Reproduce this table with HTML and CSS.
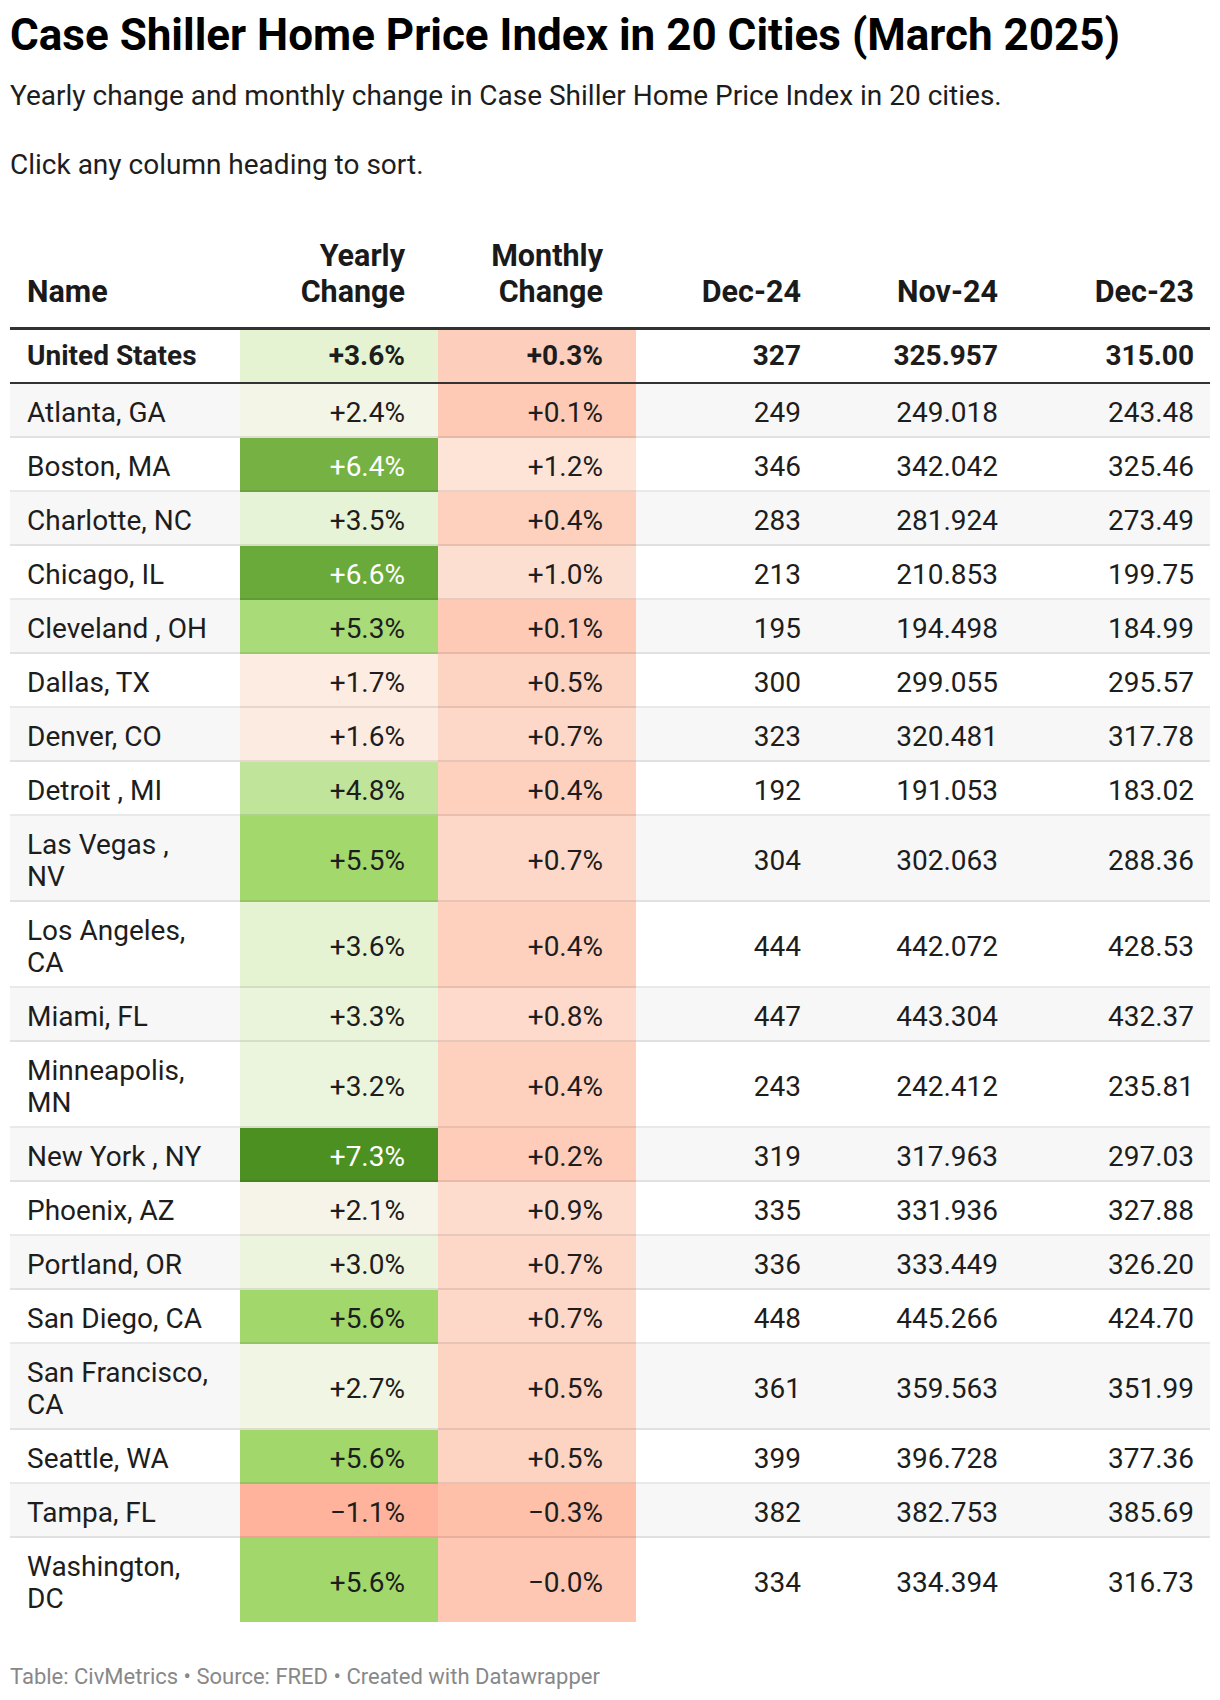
FILE: index.html
```html
<!DOCTYPE html>
<html lang="en">
<head>
<meta charset="utf-8">
<title>Case Shiller Home Price Index in 20 Cities (March 2025)</title>
<link rel="stylesheet" href="styles.css">
</head>
<body>
<div class="page">
  <h1 class="title">Case Shiller Home Price Index in 20 Cities (March 2025)</h1>
  <div class="desc">
    <p>Yearly change and monthly change in Case Shiller Home Price Index in 20 cities.</p>
    <p>Click any column heading to sort.</p>
  </div>
  <table class="data">
    <colgroup>
      <col class="c-name"><col class="c-year"><col class="c-month"><col class="c-d24"><col class="c-n24"><col class="c-d23">
    </colgroup>
    <thead>
      <tr>
        <th class="name">Name</th>
        <th class="heat">Yearly<br>Change</th>
        <th class="heat">Monthly<br>Change</th>
        <th class="num">Dec-24</th>
        <th class="num">Nov-24</th>
        <th class="num">Dec-23</th>
      </tr>
    </thead>
    <tbody>
      <tr class="total">
        <td class="name">United States</td>
        <td class="heat" style="background:#e5f3d3">+3.6%</td>
        <td class="heat" style="background:#fecebc">+0.3%</td>
        <td class="num">327</td><td class="num">325.957</td><td class="num">315.00</td>
      </tr>
      <tr>
        <td class="name">Atlanta, GA</td>
        <td class="heat" style="background:#f3f5e6">+2.4%</td>
        <td class="heat" style="background:#fecab6">+0.1%</td>
        <td class="num">249</td><td class="num">249.018</td><td class="num">243.48</td>
      </tr>
      <tr>
        <td class="name">Boston, MA</td>
        <td class="heat light" style="background:#76b243">+6.4%</td>
        <td class="heat" style="background:#fde4d7">+1.2%</td>
        <td class="num">346</td><td class="num">342.042</td><td class="num">325.46</td>
      </tr>
      <tr>
        <td class="name">Charlotte, NC</td>
        <td class="heat" style="background:#e7f3d6">+3.5%</td>
        <td class="heat" style="background:#fed1bf">+0.4%</td>
        <td class="num">283</td><td class="num">281.924</td><td class="num">273.49</td>
      </tr>
      <tr>
        <td class="name">Chicago, IL</td>
        <td class="heat light" style="background:#6aaa3b">+6.6%</td>
        <td class="heat" style="background:#fcdfd1">+1.0%</td>
        <td class="num">213</td><td class="num">210.853</td><td class="num">199.75</td>
      </tr>
      <tr>
        <td class="name">Cleveland , OH</td>
        <td class="heat" style="background:#a9db78">+5.3%</td>
        <td class="heat" style="background:#fecab6">+0.1%</td>
        <td class="num">195</td><td class="num">194.498</td><td class="num">184.99</td>
      </tr>
      <tr>
        <td class="name">Dallas, TX</td>
        <td class="heat" style="background:#fcece1">+1.7%</td>
        <td class="heat" style="background:#fdd3c2">+0.5%</td>
        <td class="num">300</td><td class="num">299.055</td><td class="num">295.57</td>
      </tr>
      <tr>
        <td class="name">Denver, CO</td>
        <td class="heat" style="background:#fcebe1">+1.6%</td>
        <td class="heat" style="background:#fdd8c8">+0.7%</td>
        <td class="num">323</td><td class="num">320.481</td><td class="num">317.78</td>
      </tr>
      <tr>
        <td class="name">Detroit , MI</td>
        <td class="heat" style="background:#c0e49a">+4.8%</td>
        <td class="heat" style="background:#fed1bf">+0.4%</td>
        <td class="num">192</td><td class="num">191.053</td><td class="num">183.02</td>
      </tr>
      <tr>
        <td class="name">Las Vegas ,<br>NV</td>
        <td class="heat" style="background:#a3d86d">+5.5%</td>
        <td class="heat" style="background:#fdd8c8">+0.7%</td>
        <td class="num">304</td><td class="num">302.063</td><td class="num">288.36</td>
      </tr>
      <tr>
        <td class="name">Los Angeles,<br>CA</td>
        <td class="heat" style="background:#e5f3d3">+3.6%</td>
        <td class="heat" style="background:#fed1bf">+0.4%</td>
        <td class="num">444</td><td class="num">442.072</td><td class="num">428.53</td>
      </tr>
      <tr>
        <td class="name">Miami, FL</td>
        <td class="heat" style="background:#e9f4da">+3.3%</td>
        <td class="heat" style="background:#fddacb">+0.8%</td>
        <td class="num">447</td><td class="num">443.304</td><td class="num">432.37</td>
      </tr>
      <tr>
        <td class="name">Minneapolis,<br>MN</td>
        <td class="heat" style="background:#ebf4dc">+3.2%</td>
        <td class="heat" style="background:#fed1bf">+0.4%</td>
        <td class="num">243</td><td class="num">242.412</td><td class="num">235.81</td>
      </tr>
      <tr>
        <td class="name">New York , NY</td>
        <td class="heat light" style="background:#4b9021">+7.3%</td>
        <td class="heat" style="background:#feccb9">+0.2%</td>
        <td class="num">319</td><td class="num">317.963</td><td class="num">297.03</td>
      </tr>
      <tr>
        <td class="name">Phoenix, AZ</td>
        <td class="heat" style="background:#f6f4e8">+2.1%</td>
        <td class="heat" style="background:#fddcce">+0.9%</td>
        <td class="num">335</td><td class="num">331.936</td><td class="num">327.88</td>
      </tr>
      <tr>
        <td class="name">Portland, OR</td>
        <td class="heat" style="background:#edf4de">+3.0%</td>
        <td class="heat" style="background:#fdd8c8">+0.7%</td>
        <td class="num">336</td><td class="num">333.449</td><td class="num">326.20</td>
      </tr>
      <tr>
        <td class="name">San Diego, CA</td>
        <td class="heat" style="background:#a1d76b">+5.6%</td>
        <td class="heat" style="background:#fdd8c8">+0.7%</td>
        <td class="num">448</td><td class="num">445.266</td><td class="num">424.70</td>
      </tr>
      <tr>
        <td class="name">San Francisco,<br>CA</td>
        <td class="heat" style="background:#f1f5e4">+2.7%</td>
        <td class="heat" style="background:#fdd3c2">+0.5%</td>
        <td class="num">361</td><td class="num">359.563</td><td class="num">351.99</td>
      </tr>
      <tr>
        <td class="name">Seattle, WA</td>
        <td class="heat" style="background:#a1d76b">+5.6%</td>
        <td class="heat" style="background:#fdd3c2">+0.5%</td>
        <td class="num">399</td><td class="num">396.728</td><td class="num">377.36</td>
      </tr>
      <tr>
        <td class="name">Tampa, FL</td>
        <td class="heat" style="background:#ffb39c">−1.1%</td>
        <td class="heat" style="background:#ffc0aa">−0.3%</td>
        <td class="num">382</td><td class="num">382.753</td><td class="num">385.69</td>
      </tr>
      <tr>
        <td class="name">Washington,<br>DC</td>
        <td class="heat" style="background:#a1d76b">+5.6%</td>
        <td class="heat" style="background:#fec7b3">−0.0%</td>
        <td class="num">334</td><td class="num">334.394</td><td class="num">316.73</td>
      </tr>
    </tbody>
  </table>
  <p class="footer">Table: CivMetrics • Source: FRED • Created with Datawrapper</p>
</div>
</body>
</html>
```

FILE: styles.css
```css
body {
  margin: 0;
  background: #ffffff;
  color: #1d1d1d;
  font-family: Roboto, "Noto Sans", "Liberation Sans", sans-serif;
}

.page {
  padding: 10px 10px 0 10px;
}

.title {
  margin: 0;
  font-size: 44px;
  line-height: 50px;
  font-weight: 700;
  color: #000000;
}

.desc {
  margin-top: 19px;
}

.desc p {
  margin: 0;
  font-size: 28px;
  line-height: 34.5px;
}

.desc p + p {
  margin-top: 34.5px;
}

.data {
  margin-top: 45px;
  width: 1200px;
  table-layout: fixed;
  border-collapse: separate;
  border-spacing: 0;
  font-size: 28px;
}

.c-name { width: 230px; }
.c-year { width: 198px; }
.c-month { width: 198px; }
.c-d24 { width: 181px; }
.c-n24 { width: 197px; }
.c-d23 { width: 196px; }

.data th {
  font-size: 30.5px;
  font-weight: 700;
  line-height: 36px;
  padding: 10px 16px 17px 16px;
  vertical-align: bottom;
  border-bottom: 3px solid #333333;
  color: #1a1a1a;
}

.data td {
  line-height: 32px;
  padding: 13px 16px 7px 16px;
  vertical-align: middle;
  border-bottom: 2px solid rgba(0, 0, 0, 0.085);
}

.data .name {
  text-align: left;
  padding-left: 17px;
  padding-right: 10px;
}

.data .heat {
  text-align: right;
  padding-right: 33px;
}

.data .num {
  text-align: right;
  padding-right: 16px;
}

.data td.light {
  color: #ffffff;
}

.data tbody tr:nth-child(even) {
  background: #f7f7f7;
}

.data tr.total td {
  font-weight: 700;
  padding-top: 10px;
  padding-bottom: 10px;
  border-bottom: 2px solid #333333;
}

.data tbody tr:last-child td {
  border-bottom: none;
}

.footer {
  margin: 42px 0 0 0;
  font-size: 22px;
  line-height: 26px;
  color: #888888;
}
```
